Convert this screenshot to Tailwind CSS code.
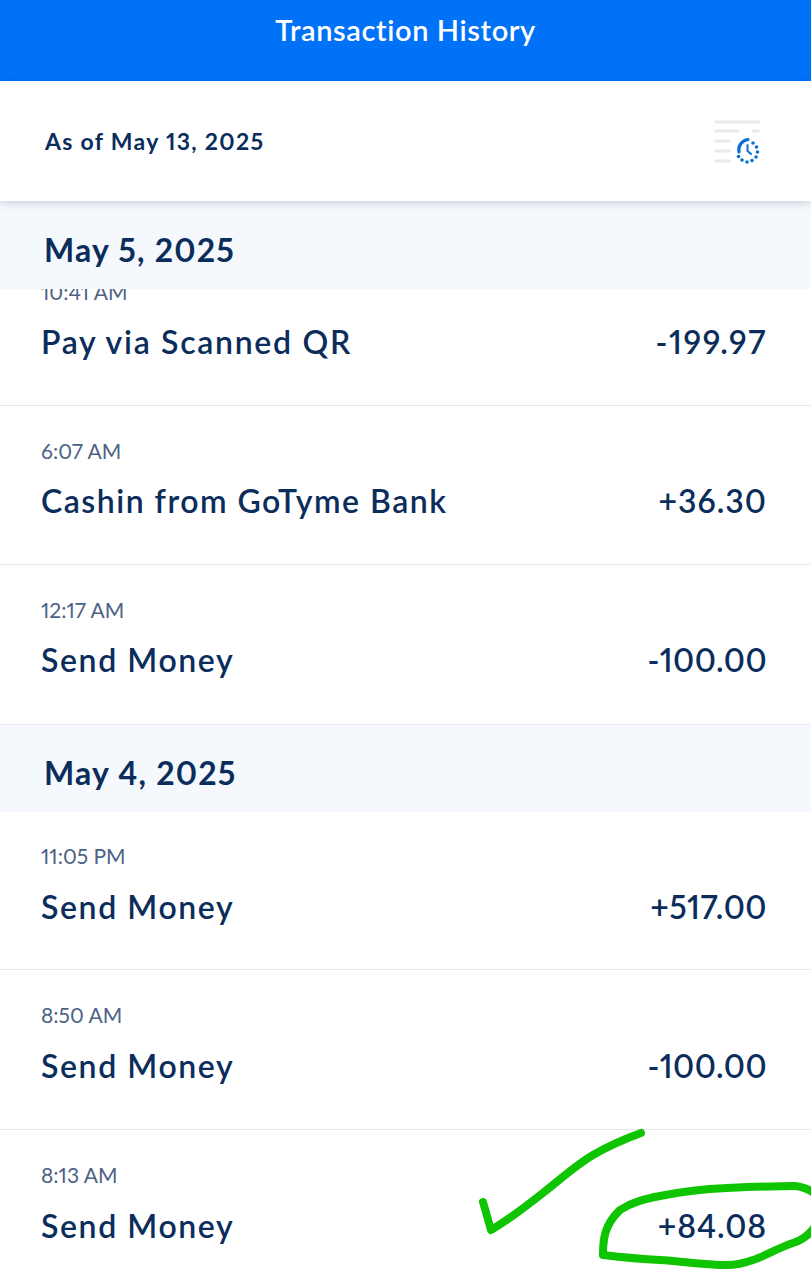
<!DOCTYPE html>
<html>
<head>
<meta charset="utf-8">
<script src="https://cdn.jsdelivr.net/npm/@tailwindcss/browser@4"></script>
</head>
<body class="bg-white">
<div class="relative w-[811px] h-[1280px] overflow-hidden bg-white font-['Lato','Noto_Sans',sans-serif] text-[#0b2d5b] proportional-nums">
  <header class="h-[81px] bg-[#0072f8] flex justify-center pt-[12px]">
    <h1 class="text-[29px] leading-[36px] font-semibold tracking-[0.6px] text-white">Transaction History</h1>
  </header>
  <div class="relative z-10 h-[120px] bg-white shadow-[0_2px_8px_rgba(30,50,80,0.2)] flex items-center justify-between pl-[45px] pr-[49px]">
    <p class="text-[23px] font-bold tracking-[1.3px]">As of May 13, 2025</p>
    <svg class="mt-[3px]" width="48" height="46" viewBox="0 0 48 46" fill="none">
      <g stroke="#e6e9ee" stroke-width="3" stroke-linecap="round">
        <path d="M2 2H45"/><path d="M2 11H24"/><path d="M39 11H44"/><path d="M2 21H15"/><path d="M2 31H15"/><path d="M2 41H15"/>
      </g>
      <g transform="translate(-2 -1)">
        <path d="M27 33A10.5 10.5 0 0 1 36 20.500" stroke="#0b6fd6" stroke-width="3.200" stroke-linecap="round"/>
        <path d="M35.500 26V32L39 35" stroke="#0b6fd6" stroke-width="2" stroke-linecap="round" stroke-linejoin="round"/>
        <g fill="#0b6fd6">
          <circle cx="41" cy="24" r="1.800"/><circle cx="44.500" cy="28" r="1.800"/><circle cx="45.500" cy="33" r="1.800"/><circle cx="44" cy="38" r="1.800"/><circle cx="40" cy="41.500" r="1.800"/><circle cx="35" cy="43" r="1.800"/><circle cx="30" cy="41" r="1.800"/><circle cx="26.500" cy="37.500" r="1.800"/>
        </g>
      </g>
    </svg>
  </div>

  <section class="h-[88px] bg-[#f5f8fd] flex items-center pl-[44px] pt-[9px] relative z-[5]">
    <h2 class="text-[32px] font-bold tracking-[1.2px]">May 5, 2025</h2>
  </section>
  <div class="h-[117px] overflow-hidden">
    <div class="mt-[-42px] h-[159px] border-b border-[#e3e6ea] pl-[41px] pr-[44px] pt-[32px]">
      <p class="text-[21px] leading-[26px] text-[#4d6285]">10:41 AM</p>
      <div class="mt-[17px] flex justify-between text-[32px] leading-[40px] font-semibold"><span class="tracking-[1.7px]">Pay via Scanned QR</span><span class="tracking-[1.6px]">-199.97</span></div>
    </div>
  </div>
  <div class="h-[159px] border-b border-[#e3e6ea] pl-[41px] pr-[44px] pt-[32px]">
    <p class="text-[21px] leading-[26px] text-[#4d6285]">6:07 AM</p>
    <div class="mt-[17px] flex justify-between text-[32px] leading-[40px] font-semibold"><span class="tracking-[1.5px]">Cashin from GoTyme Bank</span><span class="tracking-[1px]">+36.30</span></div>
  </div>
  <div class="h-[159px] pl-[41px] pr-[44px] pt-[32px]">
    <p class="text-[21px] leading-[26px] text-[#4d6285]">12:17 AM</p>
    <div class="mt-[17px] flex justify-between text-[32px] leading-[40px] font-semibold"><span class="tracking-[1.6px]">Send Money</span><span class="tracking-[0.4px]">-100.00</span></div>
  </div>

  <section class="h-[88px] bg-[#f5f8fd] border-t border-[#e8ebef] flex items-center pl-[44px] pt-[9px]">
    <h2 class="text-[32px] font-bold tracking-[1.2px]">May 4, 2025</h2>
  </section>
  <div class="h-[158px] border-b border-[#e3e6ea] pl-[41px] pr-[44px] pt-[31px]">
    <p class="text-[21px] leading-[26px] text-[#4d6285]">11:05 PM</p>
    <div class="mt-[18px] flex justify-between text-[32px] leading-[40px] font-semibold"><span class="tracking-[1.6px]">Send Money</span><span class="tracking-[0.5px]">+517.00</span></div>
  </div>
  <div class="h-[160px] border-b border-[#e3e6ea] pl-[41px] pr-[44px] pt-[32px]">
    <p class="text-[21px] leading-[26px] text-[#4d6285]">8:50 AM</p>
    <div class="mt-[18px] flex justify-between text-[32px] leading-[40px] font-semibold"><span class="tracking-[1.6px]">Send Money</span><span class="tracking-[0.4px]">-100.00</span></div>
  </div>
  <div class="h-[150px] pl-[41px] pr-[44px] pt-[32px]">
    <p class="text-[21px] leading-[26px] text-[#4d6285]">8:13 AM</p>
    <div class="mt-[18px] flex justify-between text-[32px] leading-[40px] font-semibold"><span class="tracking-[1.6px]">Send Money</span><span class="tracking-[0.9px]">+84.08</span></div>
  </div>

  <svg class="absolute left-0 top-0 pointer-events-none" width="811" height="1280" viewBox="0 0 811 1280" fill="none">
    <g stroke="#0fc400" stroke-width="8" stroke-linecap="round" stroke-linejoin="round">
      <path d="M641 1133C622 1140 605 1148 593 1155C578 1164 565 1175 553 1185C535 1199 515 1216 491 1230L483 1202"/>
      <path d="M603 1255C603 1240 604 1225 620 1210C632 1202 645 1199 660 1196C685 1191 705 1189 727 1188C750 1187 775 1186 793 1186C802 1186 808 1189 814 1193M814 1228C808 1236 800 1241 793 1243C778 1248 765 1256 753 1260C742 1264 735 1265 727 1265C705 1265 680 1261 660 1260C640 1259 620 1257 603 1255"/>
    </g>
  </svg>
</div>
</body>
</html>
